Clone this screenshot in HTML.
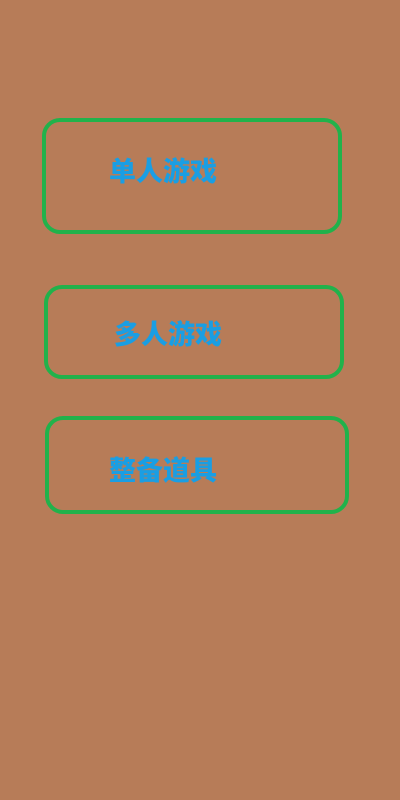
<!DOCTYPE html>
<html><head><meta charset="utf-8"><style>
html,body{margin:0;padding:0;width:400px;height:800px;background:#b77c58;overflow:hidden}
.b{position:absolute;box-sizing:border-box;border:4px solid #21b24b;border-radius:18px}
.t{position:absolute;font-family:"Liberation Sans","Noto Sans CJK SC",sans-serif;font-weight:900;font-size:27px;line-height:30px;color:#1a9ee3;white-space:nowrap}
</style></head><body>
<div class="b" style="left:42px;top:118px;width:300px;height:116px"></div>
<div class="t" style="left:109px;top:157px">单人游戏</div>
<div class="b" style="left:44px;top:285px;width:300px;height:94px"></div>
<div class="t" style="left:114px;top:320px">多人游戏</div>
<div class="b" style="left:45px;top:416px;width:304px;height:98px"></div>
<div class="t" style="left:109px;top:456px">整备道具</div>
</body></html>
